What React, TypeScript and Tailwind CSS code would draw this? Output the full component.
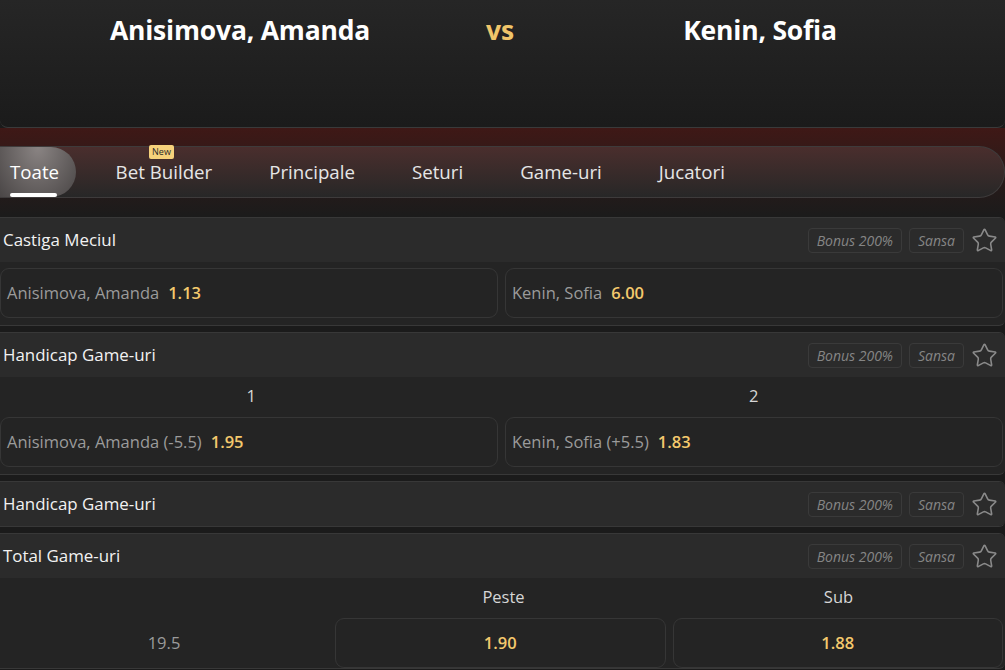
import { Star } from 'lucide-react';

const tabs = ['Toate', 'Bet Builder', 'Principale', 'Seturi', 'Game-uri', 'Jucatori'];

function MarketHeader({ title }: { title: string }) {
  return (
    <div className="flex h-[44px] items-center justify-between bg-[#2b2b2b] pl-[3px] pr-[7px]">
      <span className="text-[16.9px] text-[#f2f2f2]">{title}</span>
      <div className="flex items-center gap-[7px]">
        <span className="rounded-[4px] border border-[#3a3a3a] px-[8px] py-[1px] text-[14px] italic text-[#858585]">
          Bonus 200%
        </span>
        <span className="rounded-[4px] border border-[#3a3a3a] px-[8px] py-[1px] text-[14px] italic text-[#858585]">
          Sansa
        </span>
        <Star className="h-[27px] w-[27px] text-[#8a8a8a]" strokeWidth={1.4} />
      </div>
    </div>
  );
}

function Odd({ label, price }: { label: string; price: string }) {
  return (
    <div className="flex h-[50px] flex-1 items-center gap-[9px] rounded-[9px] border border-[#363636] bg-[#242424] px-[6px] text-[16.5px]">
      <span className="text-[#9b9b9b]">{label}</span>
      <span className="font-semibold text-[#f4c96d]">{price}</span>
    </div>
  );
}

function Market({ title, children }: { title: string; children?: React.ReactNode }) {
  return (
    <section className="overflow-hidden rounded-r-[6px] border-y border-[#383838] bg-[#242424]">
      <MarketHeader title={title} />
      {children}
    </section>
  );
}

export default function App() {
  return (
    <div
      className="h-[670px] w-[1005px] overflow-hidden bg-[#1b1b1b]"
      style={{ fontFamily: '"Open Sans", "Noto Sans", sans-serif' }}
    >
      {/* scoreboard */}
      <header className="h-[128px] rounded-b-[8px] border-b border-[#3a3a3a] bg-gradient-to-b from-[#262626] to-[#1b1b1b]">
        <div className="flex pt-[11px] text-[26.5px] font-bold tracking-[-0.2px] text-white">
          <div className="w-[480px] text-center">Anisimova, Amanda</div>
          <div className="w-[40px] text-center text-[#f0c56a]">vs</div>
          <div className="w-[480px] text-center">Kenin, Sofia</div>
        </div>
      </header>

      {/* tabs */}
      <div className="bg-gradient-to-b from-[#3f1816] via-[#2a1a19] to-[#1b1b1b] pt-[18px] pb-[19px]">
        <nav className="flex h-[52px] items-center rounded-r-full border border-l-0 border-[#3e3b3b] bg-gradient-to-b from-[#4a2e2d] to-[#272727]">
          {tabs.map((t, i) => (
            <div
              key={t}
              className={
                i === 0
                  ? 'relative flex h-[50px] items-center rounded-r-full bg-[radial-gradient(ellipse_at_top,#8a8483,#4a4646)] pl-[10px] pr-[17px] text-[18.7px] text-white'
                  : 'relative flex h-[50px] items-center px-[28.5px] text-[18.7px] text-[#e6e6e6]'
              }
              style={i === 1 ? { marginLeft: 11 } : undefined}
            >
              {t}
              {i === 0 && (
                <span className="absolute bottom-[0px] left-[10px] h-[4px] w-[47px] rounded-full bg-white" />
              )}
              {i === 1 && (
                <span className="absolute left-[62px] top-[-2px] rounded-[2px] bg-[#f6d27b] px-[3px] text-[9px] leading-[14px] text-[#2a2a2a]">
                  New
                </span>
              )}
            </div>
          ))}
        </nav>
      </div>

      <div className="flex flex-col gap-[6px]">
        <Market title="Castiga Meciul">
          <div className="flex gap-[7px] pt-[6px] pb-[7px] pr-[2px]">
            <Odd label="Anisimova, Amanda" price="1.13" />
            <Odd label="Kenin, Sofia" price="6.00" />
          </div>
        </Market>

        <Market title="Handicap Game-uri">
          <div className="flex h-[40px] items-center pb-[2px] text-[16.5px] text-[#d6d6d6]">
            <div className="flex-1 text-center">1</div>
            <div className="flex-1 text-center">2</div>
          </div>
          <div className="flex gap-[7px] pb-[7px] pr-[2px]">
            <Odd label="Anisimova, Amanda (-5.5)" price="1.95" />
            <Odd label="Kenin, Sofia (+5.5)" price="1.83" />
          </div>
        </Market>

        <Market title="Handicap Game-uri" />

        <Market title="Total Game-uri">
          <div className="flex h-[40px] items-center pb-[2px] text-[16.5px] text-[#d6d6d6]">
            <div className="w-[335px]" />
            <div className="w-[337px] text-center">Peste</div>
            <div className="flex-1 text-center">Sub</div>
          </div>
          <div className="flex gap-[7px] pr-[2px]">
            <div className="flex h-[50px] w-[328px] items-center justify-center text-[16.5px] text-[#9b9b9b]">19.5</div>
            <div className="flex h-[50px] flex-1 items-center justify-center rounded-[9px] border border-[#363636] text-[16.5px] font-semibold text-[#f4c96d]">
              1.90
            </div>
            <div className="flex h-[50px] flex-1 items-center justify-center rounded-[9px] border border-[#363636] text-[16.5px] font-semibold text-[#f4c96d]">
              1.88
            </div>
          </div>
        </Market>
      </div>
    </div>
  );
}
